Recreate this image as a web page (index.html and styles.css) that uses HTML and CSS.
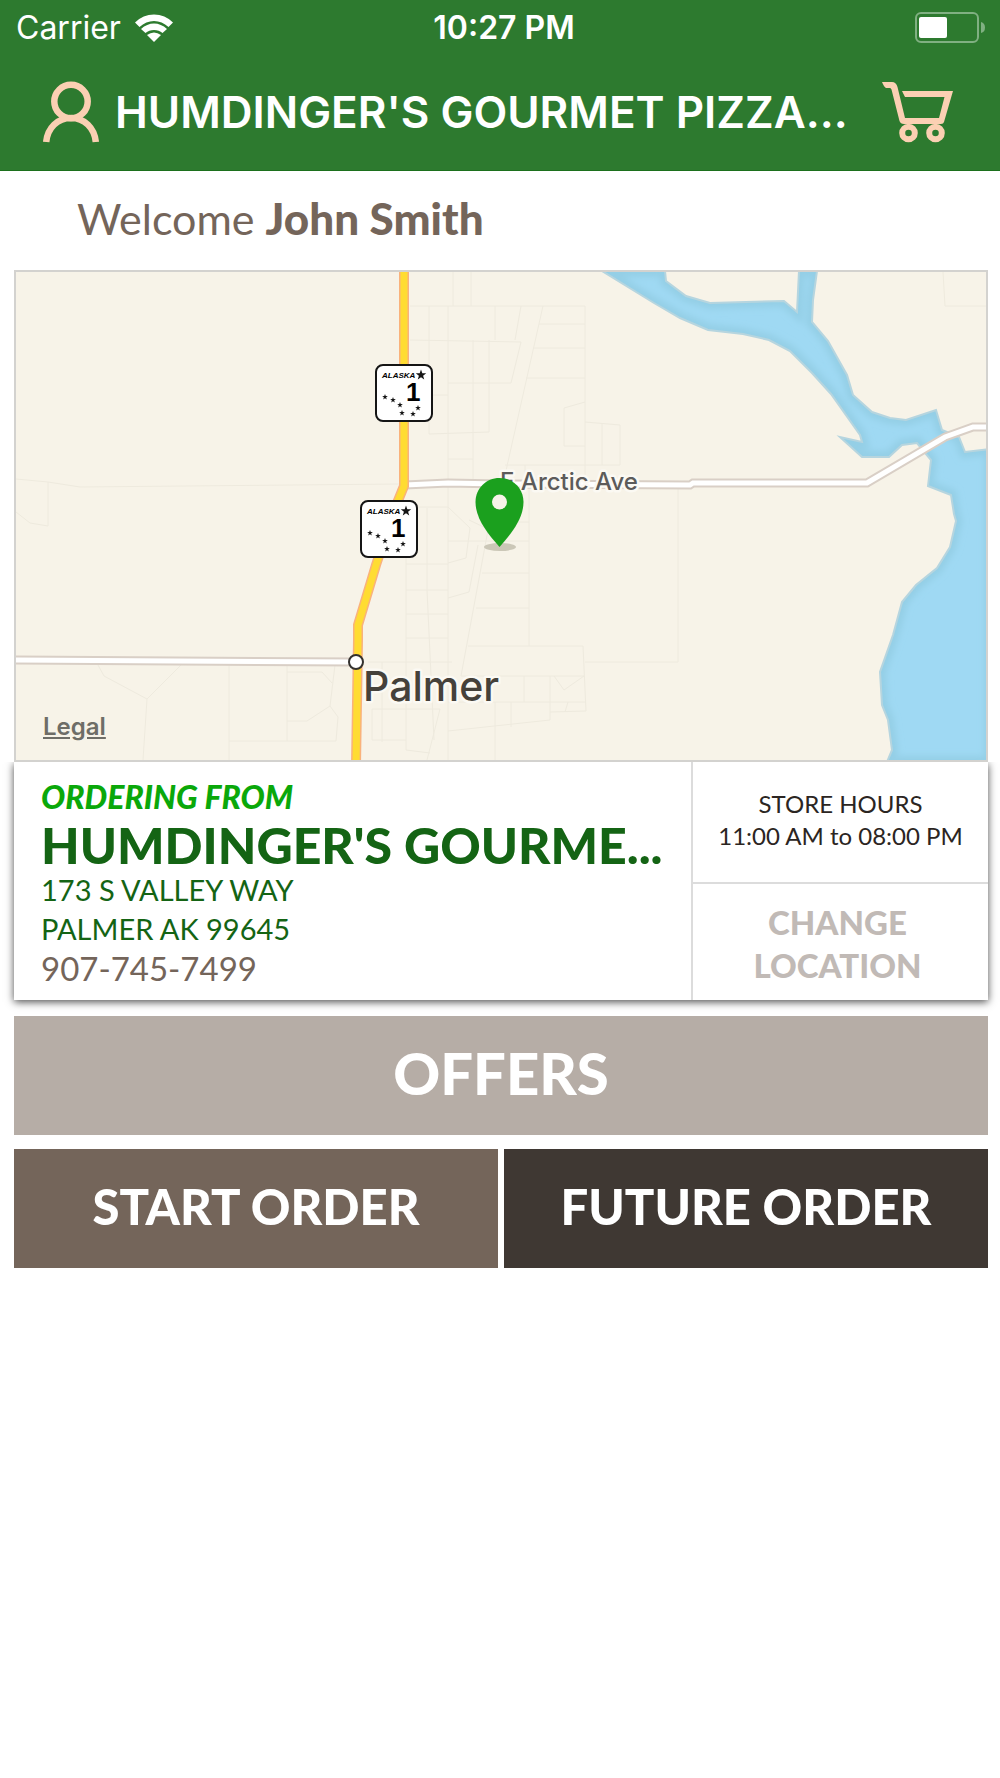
FILE: index.html
```html
<!DOCTYPE html>
<html lang="en">
<head>
  <meta charset="UTF-8">
  <meta name="viewport" content="width=device-width, initial-scale=1.0">
  <title>Humdinger's Gourmet Pizza</title>
  <link rel="stylesheet" href="styles.css">
</head>
<body>

<header>
  <div class="status-bar">
    <div class="carrier">
      <span>Carrier</span>
      <svg width="38" height="28" viewBox="0 0 38 28" fill="#fff">
        <path d="M0 8.500Q8 .5 19 .5T38 8.500L33.500 13Q27 7 19 7T4.500 13Z"/>
        <path d="M6 15Q12 9.500 19 9.500T32 15L27.500 19Q24 16 19 16T10.500 19Z"/>
        <path d="M12 21Q15.500 18.500 19 18.500T26 21L19 28Z"/>
      </svg>
    </div>
    <div class="time">10:27 PM</div>
    <div class="battery">
      <svg width="71" height="31" viewBox="0 0 71 31">
        <rect x="1" y="1" width="62" height="29" rx="5" fill="none" stroke="#80b082" stroke-width="2"/>
        <rect x="4" y="5" width="28" height="21" rx="2" fill="#fff"/>
        <path d="M66 10Q70 11 70 15.500T66 21Z" fill="#80b082"/>
      </svg>
    </div>
  </div>
  <div class="nav-bar">
    <button class="icon-btn" aria-label="Account">
      <svg width="56" height="62" viewBox="0 0 56 62" fill="none" stroke="#fbd0b3" stroke-width="6.500">
        <circle cx="28" cy="20.500" r="16.700"/>
        <path d="M3.200 61C4.500 47 14.500 37 28 37S51.500 47 52.800 61"/>
      </svg>
    </button>
    <h1>HUMDINGER'S GOURMET PIZZA...</h1>
    <button class="icon-btn" aria-label="Cart">
      <svg width="72" height="62" viewBox="0 0 72 62" fill="none" stroke="#fbd0b3" stroke-width="6">
        <path d="M0 1H10Q14 1 15.500 6L23 37H57L62.500 16H23L20 10H71L62 41Q61.500 43 59 43H22Q18.500 43 17.500 40L9.500 8.500Q9 7 8 7H4Q2 6 0 1Z" fill="#fbd0b3" stroke="none"/>
        <circle cx="26.500" cy="52" r="6.300"/>
        <circle cx="53.500" cy="52" r="6.300"/>
      </svg>
    </button>
  </div>
</header>

<main>
  <p class="welcome">Welcome <strong>John Smith</strong></p>

  <div class="map">
    <svg viewBox="16 272 970 488">
      <defs>
        <path id="star" d="M0-1L.24-.32H.95L.38.12.59.81 0 .4-.59.81-.38.12-.95-.32H-.24Z"/>
        <path id="river" d="M602 271L654 303 680 318 708 330 743 334 769 340 790 351 812 373 831 394 860 435 862 442 840 437 862 457 889 457 902 445 917 443 931 460 928 486 951 495 954 514 956 521 950 547 937 568 916 585 902 602 893 635 880 672 882 705 888 720 892 750 887 762H990V449L965 452 959 437 942 430 936 410 906 420 890 418 872 412 853 395 847 375 828 341 812 322 813 300 817 271H799L797 312 784 301 710 303 686 296 666 281 665 271Z"/>
        <path id="roads" d="M405 485L448 483 500 484 690 485 693 483H867L945 437 973 427H990M10 660L356 662"/>
        <path id="highway" d="M404 268V486L395 508 376 565 358 625V640L356 765"/>
        <clipPath id="riverClip"><use href="#river"/></clipPath>
        <filter id="soft"><feGaussianBlur stdDeviation="3"/></filter>
        <g id="shield">
          <rect x="1" y="1" width="56" height="56" rx="7" fill="#fff" stroke="#151515" stroke-width="2"/>
          <text x="7" y="14" class="shield-name">ALASKA</text>
          <text x="31" y="37" class="shield-number">1</text>
          <g fill="#151515">
            <use href="#star" transform="translate(46 11) scale(5.500)"/>
            <use href="#star" transform="translate(10 33) scale(3)"/>
            <use href="#star" transform="translate(18 36) scale(3)"/>
            <use href="#star" transform="translate(25 41) scale(3)"/>
            <use href="#star" transform="translate(27 49) scale(3)"/>
            <use href="#star" transform="translate(38 50) scale(3)"/>
            <use href="#star" transform="translate(43 44) scale(3)"/>
          </g>
        </g>
      </defs>

      <!-- small streets -->
      <path class="street" d="M16 479L48 482 80 487 400 484M48 482V526L30 523 16 512M98 665L104 676 147 699 181 665M147 699L143 760M229 665V760M229 741H336L338 717 330 706 335 665M287 665V741M287 672H322L332 683M287 721H307L330 706"/>
      <path class="street" d="M410 306H585V485M453 272V306M471 272V306M429 306V434L489 432V340M410 340L521 342 511 383H448M448 306V760M433 395H448M473 340V480M495 306V340M448 459H473M521 306L515 340M543 306L505 475M539 324H585M533 348H585M526 378H585M585 402L564 408V446H585M585 422L620 425V465H505M602 423V465M525 465V485"/>
      <path class="street" d="M406 564H448M406 508V750L430 753M427 508V590L434 740M406 507H448L470 528 466 558 448 563M469 520L490 530M448 541H529M406 590H448M406 614H448M406 638H448M448 598L469 592 478 545M482 573H529M476 608H529M529 485V646M529 522H515M368 662H452M468 646H583L586 711 550 712V720L448 731M678 488V662H585M488 530L461 676H584L564 690 554 676M448 702H586M524 676V702M550 676V712M568 702L565 712M511 702V727M372 709H440L427 760M372 709V740H406M382 662V742M495 702V760M943 272L945 306H986"/>

      <!-- river -->
      <use href="#river" fill="#9fd9f3"/>
      <g clip-path="url(#riverClip)">
        <use href="#river" fill="none" stroke="#94cfe6" stroke-width="12" filter="url(#soft)"/>
      </g>
      <use href="#river" fill="none" stroke="#b6d5df" stroke-width="2"/>

      <!-- roads -->
      <use href="#roads" class="road-edge"/>
      <use href="#roads" class="road-core"/>
      <use href="#highway" class="highway-edge"/>
      <use href="#highway" class="highway-core"/>

      <use href="#shield" x="375" y="364"/>
      <use href="#shield" x="360" y="500"/>
      <circle cx="356" cy="662" r="7" fill="#fff" stroke="#33312e" stroke-width="2"/>

      <text x="500" y="490" class="road-label">E Arctic Ave</text>
      <text x="363" y="701" class="town-label">Palmer</text>

      <ellipse cx="500" cy="547" rx="16" ry="4" fill="#cbc7b7"/>
      <path d="M499.500 478C486 478 475.500 488.500 475.500 502C475.500 518 487 533 499.500 547C512 533 523.500 518 523.500 502C523.500 488.500 513 478 499.500 478Z" fill="#1ba01e"/>
      <circle cx="499.500" cy="502" r="7.500" fill="#f7f3e9"/>
    </svg>
    <a href="#" class="legal">Legal</a>
  </div>

  <section class="store">
    <div class="store-info">
      <p class="ordering">ORDERING FROM</p>
      <h2>HUMDINGER'S GOURME...</h2>
      <address>173 S VALLEY WAY<br>PALMER AK 99645</address>
      <a href="tel:9077457499" class="phone">907-745-7499</a>
    </div>
    <div class="store-side">
      <p class="hours">STORE HOURS<br>11:00 AM to 08:00 PM</p>
      <button class="change-btn">CHANGE<br>LOCATION</button>
    </div>
  </section>

  <div class="actions">
    <button class="offers">OFFERS</button>
    <button class="start">START ORDER</button>
    <button class="future">FUTURE ORDER</button>
  </div>
</main>

</body>
</html>
```
FILE: styles.css
```css
:root {
  --header-color: #2d7a2f;
  --brown: #74655a;
  --dark-green: #146414;
  --line-color: #dcdcdc;
}
* {
  box-sizing: border-box;
}
body {
  margin: 0;
  background-color: #fff;
  font-family: Lato, sans-serif;
  color: #2b2522;
}
h1, h2, p {
  margin: 0;
}
button {
  border: none;
  padding: 0;
  font-family: inherit;
  cursor: pointer;
}
svg {
  display: block;
}
header {
  background-color: var(--header-color);
  border-bottom: 1px solid #1c701d;
  color: white;
  font-family: Inter, sans-serif;
}
.status-bar {
  display: grid;
  grid-template-columns: 1fr auto 1fr;
  align-items: center;
  height: 55px;
  padding: 0 14px 0 16px;
  font-size: 32px;
}
.carrier {
  display: flex;
  align-items: center;
  gap: 14px;
}
.time {
  font-weight: 600;
  padding-left: 6px;
}
.battery {
  justify-self: end;
}
.nav-bar {
  display: flex;
  align-items: center;
  height: 115px;
  padding: 0 46px 2px 43px;
}
.icon-btn {
  background: none;
}
h1 {
  flex: 1;
  margin: 0 16px;
  font-size: 44px;
  font-weight: 600;
  white-space: nowrap;
}
main {
  padding: 0 12px 0 14px;
}
.welcome {
  padding: 15px 0 19px 63px;
  font-size: 43px;
  line-height: 64px;
  color: var(--brown);
}
.welcome strong {
  font-size: 44px;
  font-weight: 900;
}
.map {
  position: relative;
  border: 2px solid #d3d2cf;
  background-color: #f7f3e8;
}
.map svg {
  width: 100%;
}
.map text {
  font-family: Inter, sans-serif;
  font-weight: 500;
}
.street {
  fill: none;
  stroke: #eeeade;
  stroke-width: 1;
}
.road-edge {
  fill: none;
  stroke: #d9cfc6;
  stroke-width: 9;
}
.road-core {
  fill: none;
  stroke: #fff;
  stroke-width: 5;
}
.highway-edge {
  fill: none;
  stroke: #f9b27c;
  stroke-width: 10;
}
.highway-core {
  fill: none;
  stroke: #ffdc32;
  stroke-width: 7;
}
.map .shield-name {
  font-family: "Liberation Sans", sans-serif;
  font-size: 8px;
  font-weight: 700;
  font-style: italic;
}
.map .shield-number {
  font-family: "Liberation Sans", sans-serif;
  font-size: 26px;
  font-weight: 700;
}
.road-label, .town-label {
  paint-order: stroke;
  stroke: #fbf9f3;
  stroke-width: 5;
  stroke-linejoin: round;
}
.road-label {
  font-size: 24px;
  fill: #5c5b5a;
}
.town-label {
  font-size: 41px;
  fill: #45413a;
}
.legal {
  position: absolute;
  left: 27px;
  bottom: 18px;
  font: 600 24px/30px Inter, sans-serif;
  color: #6e6d67;
}
.store {
  display: grid;
  grid-template-columns: 7fr minmax(295px, 3fr);
  background-color: white;
  box-shadow: 0 2px 8px rgba(0, 0, 0, 0.7);
  clip-path: inset(0 -12px -14px -12px);
}
.store-info {
  padding: 12px 20px 12px 27px;
  border-right: 2px solid var(--line-color);
}
.ordering {
  font-size: 32px;
  line-height: 46px;
  font-weight: 900;
  font-style: italic;
  color: #0aa80a;
}
h2 {
  font-size: 50px;
  line-height: 50px;
  font-weight: 900;
  white-space: nowrap;
  color: var(--dark-green);
}
address {
  font-size: 29px;
  line-height: 39px;
  font-style: normal;
  color: var(--dark-green);
}
.phone {
  display: block;
  font-size: 33px;
  line-height: 40px;
  color: var(--brown);
  text-decoration: none;
}
.store-side {
  display: grid;
  grid-template-rows: 122px 1fr;
}
.hours {
  padding-top: 26px;
  border-bottom: 2px solid var(--line-color);
  font-size: 24px;
  line-height: 32px;
  text-align: center;
}
.change-btn {
  background-color: white;
  color: #c1bab6;
  font-size: 33px;
  font-weight: 900;
  line-height: 43px;
  padding: 3px 6px 0 0;
}
.actions {
  display: grid;
  grid-template-columns: 1fr 1fr;
  gap: 14px 6px;
  padding-top: 16px;
}
.actions button {
  height: 119px;
  padding-bottom: 6px;
  color: white;
  font-size: 49px;
  font-weight: 900;
}
.actions .offers {
  grid-column: 1 / 3;
  background-color: #b6ada6;
  font-size: 58px;
}
.actions .start {
  background-color: var(--brown);
}
.actions .future {
  background-color: #3f3833;
}
```
